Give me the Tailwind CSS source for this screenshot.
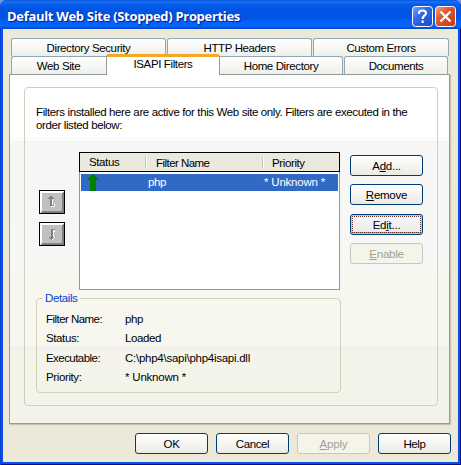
<!DOCTYPE html>
<html lang="en">
<head>
<meta charset="utf-8">
<title>Default Web Site (Stopped) Properties</title>
<script src="https://cdn.jsdelivr.net/npm/@tailwindcss/browser@4"></script>
</head>
<body class="w-[461px] h-[465px] overflow-hidden bg-[#7a96df] font-['Liberation_Sans',Arial,sans-serif] text-[11.500px] tracking-[-0.380px] leading-[13px] text-black whitespace-nowrap">
<div class="w-[461px] h-[465px] flex flex-col rounded-t-[7px] overflow-hidden bg-[#0b50e4] shadow-[inset_1px_0_#0a3fd6,inset_-1px_-1px_#00138c]">
  <header class="h-[29px] shrink-0 flex items-center pl-[7px] pr-[5px] bg-[linear-gradient(180deg,#0a55d8_0px,#1a70f4_2px,#0560ee_4px,#0055e5_8px,#0054e3_18px,#0463fb_22px,#0463fb_26px,#0046cf_29px)]">
    <h1 class="grow pt-[3px] font-['Open_Sans',sans-serif] font-bold text-[13px] leading-[18px] text-white tracking-[-0.310px] [text-shadow:1px_1px_1px_#0a1883]">Default Web Site (Stopped) Properties</h1>
    <div class="flex gap-[2px] pt-[3px]">
      <svg width="21" height="21" viewBox="0 0 21 21"><defs><linearGradient id="b" x2="1" y2="1"><stop stop-color="#7ba4f7"/><stop offset=".4" stop-color="#316bec"/><stop offset="1" stop-color="#1746c8"/></linearGradient><linearGradient id="r" x2="1" y2="1"><stop stop-color="#f2a38d"/><stop offset=".4" stop-color="#e2562f"/><stop offset="1" stop-color="#c63a12"/></linearGradient></defs><rect x=".5" y=".5" width="20" height="20" rx="3" fill="url(#b)" stroke="#fff"/><path d="M7 8V6.500Q7.500 4.500 10.500 4.500Q14 4.500 14 7.300Q14 9 12 10Q10.600 11 10.600 13M10.600 14.500V17" fill="none" stroke="#fff" stroke-width="2.200"/></svg>
      <svg width="21" height="21" viewBox="0 0 21 21"><rect x=".5" y=".5" width="20" height="20" rx="3" fill="url(#r)" stroke="#fff"/><path d="M5.500 5.500L15.500 15.500M15.500 5.500L5.500 15.500" stroke="#fff" stroke-width="2.300"/></svg>
    </div>
  </header>
  <main class="h-[433px] mx-[3px] bg-[#ece9d8] flex flex-col pt-[9px]">
    <div class="h-[18px] flex gap-px pl-[8px] text-center leading-[18px]">
      <div class="w-[155px] rounded-t-[3px] border border-b-0 border-[#91a7b4] bg-linear-to-b from-white to-[#f0f0ea]"><span>Directory Security</span></div>
      <div class="w-[145px] rounded-t-[3px] border border-b-0 border-[#91a7b4] bg-linear-to-b from-white to-[#f0f0ea]"><span>HTTP Headers</span></div>
      <div class="w-[136px] rounded-t-[3px] border border-b-0 border-[#91a7b4] bg-linear-to-b from-white to-[#f0f0ea]"><span>Custom Errors</span></div>
    </div>
    <div class="h-[18px] flex pl-[8px] text-center leading-[18px]">
      <div class="w-[96px] rounded-tl-[3px] border border-b-0 border-r-0 border-[#91a7b4] bg-linear-to-b from-white to-[#f0f0ea] pr-[2px]"><span>Web Site</span></div>
      <div class="relative z-10 w-[114px] h-[21px] -mt-[2px] -ml-px rounded-t-[3px] border-x border-[#919b9c] border-t-[3px] border-t-[#f4a82b] bg-white leading-[15px]"><span>ISAPI Filters</span></div>
      <div class="w-[123px] rounded-tr-[3px] border border-b-0 border-l-0 border-[#91a7b4] bg-linear-to-b from-white to-[#f0f0ea]"><span>Home Directory</span></div>
      <div class="w-[104px] ml-px rounded-t-[3px] border border-b-0 border-[#91a7b4] bg-linear-to-b from-white to-[#f0f0ea]"><span>Documents</span></div>
    </div>
    <section class="ml-[6px] w-[441px] h-[350px] shrink-0 border border-[#919b9c] shadow-[1px_1px_1px_#c8c5b4] pt-[12px] pl-[14px] bg-[linear-gradient(180deg,#fff_0px,#fff_62px,#f6f6f5_63px,#fff_64px,#f6f6f5_67px,#f7f7f6_190px,#f7f6ef_202px,#f7f6ef_270px,#f0efeb_274px,#f5f4eb_278px,#f4f3ea_348px)]">
      <div class="w-[414px] h-[319px] rounded-[4px] border border-[#d0d0bf] pt-[18px]">
        <p class="pl-[11px] h-[26px]"><span>Filters installed here are active for this Web site only. Filters are executed in the</span><br><span>order listed below:</span></p>
        <div class="flex mt-[20px] pl-[14px]">
          <div class="flex flex-col gap-[8px] mt-[38px] w-[26px] mr-[14px]">
            <svg width="26" height="24" viewBox="0 0 26 24" shape-rendering="crispEdges"><rect width="26" height="24" fill="#000"/><path d="M1 1H25V23H1Z" fill="#808080"/><path d="M1 1H25L23 3H3V21L1 23Z" fill="#fff"/><path d="M3 3H23V21H3Z" fill="#c0c0c0"/><path d="M13 8h2v1h-1v6h1v-1h1v3h-4v-1h1z" fill="#fff"/><path d="M11 6h2v1h1v1h1v1h-2v6h2v1h-4V9H9V8h1V7h1z" fill="#808080"/></svg>
            <svg width="26" height="24" viewBox="0 0 26 24" shape-rendering="crispEdges"><rect width="26" height="24" fill="#000"/><path d="M1 1H25V23H1Z" fill="#808080"/><path d="M1 1H25L23 3H3V21L1 23Z" fill="#fff"/><path d="M3 3H23V21H3Z" fill="#c0c0c0"/><path d="M14 8h2v2h-1v5h1v1h-1v1h-1v1h-1v-1h1v-2z" fill="#fff"/><path d="M12 7h4v1h-2v7h1v1h-1v1h-1v1h-1v-1h-1v-1h-1v-1h2z" fill="#808080"/></svg>
          </div>
          <div class="w-[261px] h-[138px] border border-[#7f9db9] bg-white">
            <div class="-ml-px -mt-px w-[261px] h-[20px] border border-black bg-[#ebe8dc] flex items-center">
              <span class="pl-[9px] w-[65px]">Status</span>
              <span class="border-l border-[#c7c5b2] shadow-[inset_1px_0_#fff] h-[11px] leading-[12px] pl-[10px] w-[117px] tracking-[-0.550px]">Filter Name</span>
              <span class="border-l border-[#c7c5b2] shadow-[inset_1px_0_#fff] h-[11px] leading-[12px] pl-[9px]">Priority</span>
            </div>
            <div class="mx-px mt-[2px] h-[17px] bg-[#316ac5] text-white flex items-center">
              <svg class="ml-[6px] self-start shrink-0" width="12" height="17" viewBox="0 0 12 17" shape-rendering="crispEdges"><path d="M5 0H7V1H8V2H9V3H10V4H11V5H12V6H9V17H3V6H0V5H1V4H2V3H3V2H4V1H5Z" fill="#008000"/></svg>
              <span class="w-[165px] pl-[49px]">php</span><span class="tracking-[-0.200px]">* Unknown *</span>
            </div>
          </div>
          <div class="ml-[10px] mt-[3px] w-[73px] flex flex-col gap-[8px] text-center leading-[20px] tracking-[-0.250px]">
            <button class="h-[21px] rounded-[3px] border border-[#003c74] bg-linear-to-b from-white to-[#eceaE4]"><span>A<u>d</u>d...</span></button>
            <button class="h-[21px] rounded-[3px] border border-[#003c74] bg-linear-to-b from-white to-[#eceaE4]"><span><u>R</u>emove</span></button>
            <button class="mt-px h-[21px] rounded-[3px] border border-[#003c74] bg-linear-to-b from-[#f6f7fc] to-[#eceaE4] shadow-[inset_0_0_0_1px_#b6cbf0,inset_0_-2px_#8f9fe0] p-px"><span class="block h-[17px] leading-[16px] border border-dotted border-[#5b3030]"><span>Ed<u>i</u>t...</span></span></button>
            <button class="h-[21px] rounded-[3px] border border-[#c9c7ba] bg-[#f5f4ea] text-[#a1a192]"><span><u>E</u>nable</span></button>
          </div>
        </div>
        <div class="ml-[11px] mt-[8px] w-[305px] h-[95px] rounded-[4px] border border-[#d0d0bf]">
          <div class="-mt-[7px] ml-[6px] w-[37px] px-[2px] bg-[#f7f6ef] text-[#0046d5]"><span>Details</span></div>
          <dl class="grid grid-cols-[79px_auto] ml-[9px] mt-[5px] auto-rows-[19.400px] leading-[19px]">
            <dt class="tracking-[-0.550px]"><span>Filter Name:</span></dt><dd><span>php</span></dd>
            <dt><span>Status:</span></dt><dd><span>Loaded</span></dd>
            <dt class="tracking-[-0.550px]"><span>Executable:</span></dt><dd class="tracking-[-0.260px]"><span>C:\php4\sapi\php4isapi.dll</span></dd>
            <dt><span>Priority:</span></dt><dd class="tracking-[-0.200px]"><span>* Unknown *</span></dd>
          </dl>
        </div>
      </div>
    </section>
    <footer class="flex gap-[8px] pl-[132px] mt-[9px] text-center leading-[20px]">
      <button class="w-[73px] h-[21px] rounded-[3px] border border-[#003c74] bg-linear-to-b from-white to-[#eceaE4]"><span>OK</span></button>
      <button class="w-[73px] h-[21px] rounded-[3px] border border-[#003c74] bg-linear-to-b from-white to-[#eceaE4]"><span>Cancel</span></button>
      <button class="w-[73px] h-[21px] rounded-[3px] border border-[#c9c7ba] bg-[#f5f4ea] text-[#a1a192] tracking-[-0.200px]"><span><u>A</u>pply</span></button>
      <button class="w-[73px] h-[21px] rounded-[3px] border border-[#003c74] bg-linear-to-b from-white to-[#eceaE4]"><span>Help</span></button>
    </footer>
  </main>
</div>
</body>
</html>
